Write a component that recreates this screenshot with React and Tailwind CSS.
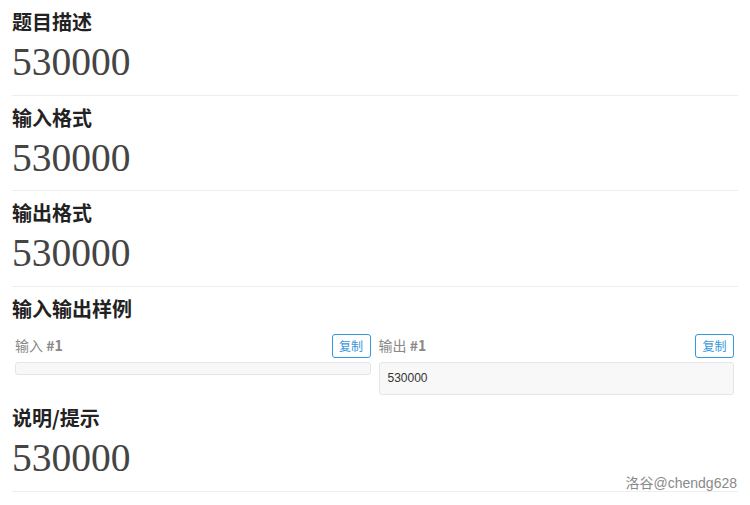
import React from "react";

function Heading({ children }) {
  return (
    <h3 className="mt-[9px] h-[26px] font-['Noto_Sans_CJK_SC','Liberation_Sans',sans-serif] text-[20px] leading-[26px] font-bold text-[#222]">
      {children}
    </h3>
  );
}

function Section({ title, value, border = true }) {
  return (
    <div className={border ? "border-b border-[#eeeeee] pb-[10.5px]" : "pb-[10.5px]"}>
      <Heading>{title}</Heading>
      <div className="mt-[6px] h-[43px] font-['Liberation_Serif','DejaVu_Serif',serif] text-[39.5px] leading-[43px] text-[#444]">
        {value}
      </div>
    </div>
  );
}

function CopyBtn() {
  return (
    <button className="h-[24px] w-[39px] rounded-[3px] border border-[#3498db] bg-white font-['Noto_Sans_CJK_SC',sans-serif] text-[12px] leading-[22px] text-[#3498db]">
      复制
    </button>
  );
}

function Label({ text }) {
  return (
    <span className="font-['Noto_Sans_CJK_SC','Liberation_Sans',sans-serif] text-[14px] text-[#888]">
      {text} <span className="font-bold">#1</span>
    </span>
  );
}

export default function App() {
  return (
    <div className="relative h-[505px] w-[750px] overflow-hidden bg-white px-[12px]">
      <Section title="题目描述" value="530000" />
      <Section title="输入格式" value="530000" />
      <Section title="输出格式" value="530000" />
      <div className="pb-[1.5px]">
        <Heading>输入输出样例</Heading>
        <div className="mt-[12px] grid grid-cols-2 gap-[8px] pl-[3px] pr-[4px]">
          <div>
            <div className="flex h-[24px] items-center justify-between">
              <Label text="输入" />
              <CopyBtn />
            </div>
            <div className="mt-[4px] h-[13px] rounded-[3px] border border-[#e5e5e5] bg-[#f8f8f8]"></div>
          </div>
          <div>
            <div className="flex h-[24px] items-center justify-between">
              <Label text="输出" />
              <CopyBtn />
            </div>
            <div className="mt-[4px] h-[33px] rounded-[3px] border border-[#e5e5e5] bg-[#f8f8f8] px-[8px] font-['Liberation_Sans','Noto_Sans_CJK_SC',sans-serif] text-[12px] leading-[31px] text-[#333]">
              530000
            </div>
          </div>
        </div>
      </div>
      <Section title="说明/提示" value="530000" />
      <div className="absolute right-[13px] top-[473px] font-['Liberation_Sans','Noto_Sans_CJK_SC',sans-serif] text-[14px] leading-[20px] text-[#8a8a8a]">
        洛谷@chendg628
      </div>
    </div>
  );
}
